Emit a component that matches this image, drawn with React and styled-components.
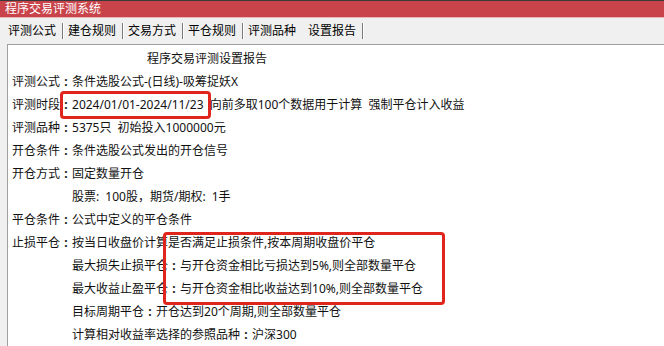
import React from 'react';
import styled, { createGlobalStyle } from 'styled-components';

const GlobalStyle = createGlobalStyle`
  html, body {
    margin: 0;
    padding: 0;
    background: #f0f0f0;
  }
  body {
    font-family: "Noto Sans", "Noto Sans CJK SC", sans-serif;
    font-size: 12px;
    color: #111;
  }
`;

const tabs = ['评测公式', '建仓规则', '交易方式', '平仓规则', '评测品种', '设置报告'];
const activeTab = 5;

// Lignes du rapport : indent = ligne décalée sous la précédente
const rows = [
  { label: '评测公式', value: '条件选股公式-(日线)-吸筹捉妖X' },
  { label: '评测时段', value: '2024/01/01-2024/11/23 向前多取100个数据用于计算 强制平仓计入收益' },
  { label: '评测品种', value: '5375只 初始投入1000000元' },
  { label: '开仓条件', value: '条件选股公式发出的开仓信号' },
  { label: '开仓方式', value: '固定数量开仓' },
  { indent: true, value: '股票: 100股，期货/期权: 1手' },
  { label: '平仓条件', value: '公式中定义的平仓条件' },
  { label: '止损平仓', value: '按当日收盘价计算是否满足止损条件,按本周期收盘价平仓' },
  { indent: true, label: '最大损失止损平仓', value: '与开仓资金相比亏损达到5%,则全部数量平仓' },
  { indent: true, label: '最大收益止盈平仓', value: '与开仓资金相比收益达到10%,则全部数量平仓' },
  { indent: true, label: '目标周期平仓', value: '开仓达到20个周期,则全部数量平仓' },
  { indent: true, label: '计算相对收益率选择的参照品种', value: '沪深300' },
];

const App = () => {
  return (
    <Window>
      <GlobalStyle />
      <TitleBar>程序交易评测系统</TitleBar>
      <TabBar>
        {tabs.map((t, i) => (
          <Tab key={t} $noSep={i === activeTab - 1}>
            {t}
          </Tab>
        ))}
      </TabBar>
      <Panel>
        <ReportTitle>程序交易评测设置报告</ReportTitle>
        {rows.map((r, i) => (
          <Row key={i} $indent={r.indent}>
            {r.label && (
              <>
                <span>{r.label}</span>
                <Colon>:</Colon>
              </>
            )}
            <span>{r.value}</span>
          </Row>
        ))}
        <Highlight $left={52} $top={46} $width={151} $height={28} />
        <Highlight $left={155} $top={187} $width={282} $height={73} />
      </Panel>
    </Window>
  );
};

const Window = styled.div`
  width: 664px;
  height: 346px;
  overflow: hidden;
  display: flex;
  flex-direction: column;
  background: #f0f0f0;
`;

const TitleBar = styled.div`
  height: 17px;
  line-height: 16px;
  border-top: 1px solid #3a3a3a;
  border-bottom: 1px solid #e9b7ba;
  background: #c9434a;
  color: #fff;
  padding-left: 5px;
  font-size: 12px;
`;

const TabBar = styled.div`
  display: flex;
  align-items: flex-start;
  height: 29px;
  padding: 4px 0 0 3px;
  box-sizing: border-box;
`;

const Tab = styled.div`
  height: 16px;
  line-height: 16px;
  margin-top: 1px;
  padding: 0 6px 0 5px;
  border-right: 1px solid ${(p) => (p.$noSep ? 'transparent' : '#7a7a7a')};
  box-shadow: ${(p) => (p.$noSep ? 'none' : '1px 0 0 #fff')};
  color: #000;
  font-size: 12px;
  white-space: nowrap;
`;

const Panel = styled.div`
  position: relative;
  flex: 1;
  margin-left: 7px;
  border-top: 1px solid #a0a0a0;
  border-left: 1px solid #a0a0a0;
  background: #fff;
  padding: 2px 0 0 4px;
`;

const ReportTitle = styled.div`
  height: 23px;
  line-height: 23px;
  padding-left: 135px;
  color: #111;
`;

const Row = styled.div`
  display: flex;
  height: 23px;
  line-height: 23px;
  padding-left: ${(p) => (p.$indent ? '60px' : '0')};
  white-space: pre;
  word-spacing: 3px;
  color: #111;
`;

const Colon = styled.span`
  width: 12px;
  text-align: center;
  font-weight: bold;
`;

const Highlight = styled.div`
  position: absolute;
  left: ${(p) => p.$left}px;
  top: ${(p) => p.$top}px;
  width: ${(p) => p.$width}px;
  height: ${(p) => p.$height}px;
  box-sizing: border-box;
  border: 3px solid #e0261c;
  border-radius: 4px;
`;

export default App;
